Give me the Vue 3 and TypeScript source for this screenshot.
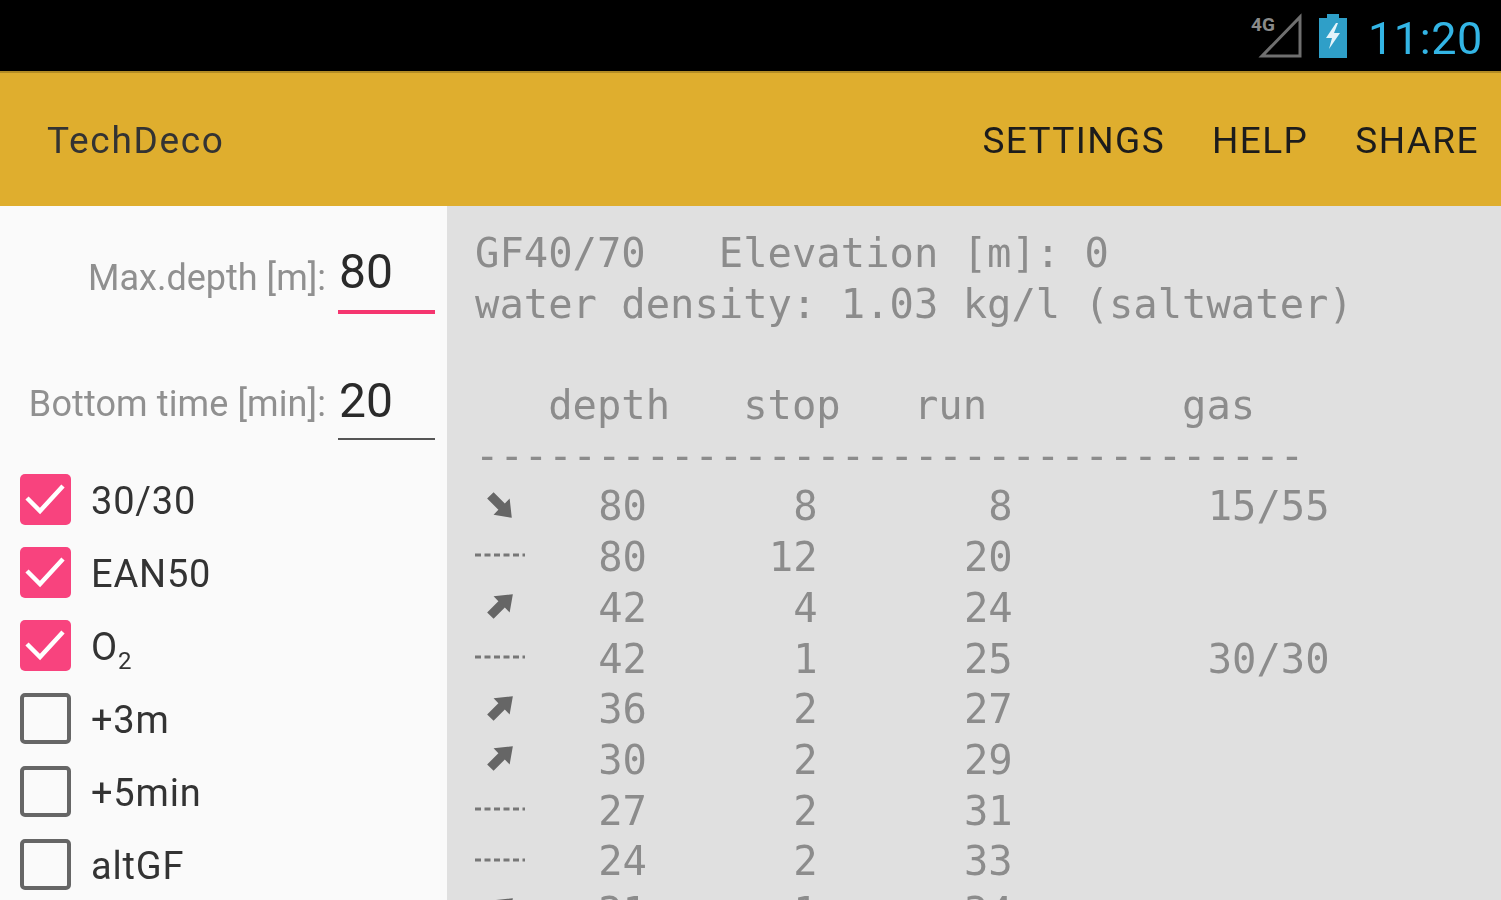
<script setup lang="ts">
interface Check { label: string; sub?: string; on: boolean }
interface Row { icon: 'down' | 'up' | 'flat'; text: string }

const checks: Check[] = [
  { label: '30/30', on: true },
  { label: 'EAN50', on: true },
  { label: 'O', sub: '2', on: true },
  { label: '+3m', on: false },
  { label: '+5min', on: false },
  { label: 'altGF', on: false },
]

const rows: Row[] = [
  { icon: 'down', text: '   80      8       8        15/55' },
  { icon: 'flat', text: '   80     12      20' },
  { icon: 'up', text: '   42      4      24' },
  { icon: 'flat', text: '   42      1      25        30/30' },
  { icon: 'up', text: '   36      2      27' },
  { icon: 'up', text: '   30      2      29' },
  { icon: 'flat', text: '   27      2      31' },
  { icon: 'flat', text: '   24      2      33' },
  { icon: 'up', text: '   21      1      34' },
]
</script>

<template>
  <div class="screen">
    <div class="status">
      <svg class="signal" viewBox="0 0 52 46" width="52" height="46">
        <path d="M49 4V43H11Z" fill="none" stroke="#6f6f6f" stroke-width="3" />
        <text x="0" y="18" class="net">4G</text>
      </svg>
      <svg class="battery" viewBox="0 0 30 44" width="30" height="44">
        <path d="M9 0h12v4h8v40H1V4h8z" fill="#2f9fc8" />
        <path d="M18 9 8 24h6l-3 11 11-16h-6l4-10z" fill="#e4f4fa" />
      </svg>
      <span class="clock">11:20</span>
    </div>
    <header class="bar">
      <span class="title">TechDeco</span>
      <nav class="actions">
        <span>SETTINGS</span>
        <span>HELP</span>
        <span>SHARE</span>
      </nav>
    </header>
    <main class="body">
      <aside class="left">
        <div class="field first">
          <label>Max.depth [m]:</label>
          <span class="input active">80</span>
        </div>
        <div class="field second">
          <label>Bottom time [min]:</label>
          <span class="input">20</span>
        </div>
        <ul class="checks">
          <li v-for="c in checks" :key="c.label">
            <span class="box" :class="{ on: c.on }">
              <svg v-if="c.on" viewBox="0 0 51 51" width="51" height="51">
                <path d="M7 24 20 37 43 12" fill="none" stroke="#fff" stroke-width="4.5" />
              </svg>
            </span>
            <span class="check-label">{{ c.label }}<sub v-if="c.sub">{{ c.sub }}</sub></span>
          </li>
        </ul>
      </aside>
      <section class="plan">
        <pre class="line">GF40/70   Elevation [m]: 0</pre>
        <pre class="line">water density: 1.03 kg/l (saltwater)</pre>
        <pre class="line head">   depth   stop   run        gas</pre>
        <pre class="line">----------------------------------</pre>
        <div v-for="(r, i) in rows" :key="i" class="row">
          <span class="glyph">
            <svg v-if="r.icon === 'flat'" class="dots" viewBox="0 0 50 8" width="50" height="8">
              <path d="M0 4H50" stroke="#777" stroke-width="3" stroke-dasharray="6 3.500" fill="none" />
            </svg>
            <svg v-else class="arrow" :class="{ flip: r.icon === 'down' }" viewBox="0 0 28 28" width="30" height="30">
              <path d="M26 3 23 20 18.500 15.500 8 26 2 20 12.500 9.500 8 5Z" fill="#666" />
            </svg>
          </span>
          <pre class="line inline">{{ r.text }}</pre>
        </div>
      </section>
    </main>
  </div>
</template>

<style>
html, body { margin: 0; background: #000; }
</style>

<style scoped>
.screen {
  width: 1501px;
  height: 900px;
  overflow: hidden;
  display: flex;
  flex-direction: column;
  font-family: Roboto, "Liberation Sans", sans-serif;
  filter: blur(0.6px);
}
.status {
  height: 71px;
  flex: none;
  background: #000;
  display: flex;
  align-items: center;
  justify-content: flex-end;
  padding: 0 18px 0 0;
  box-sizing: border-box;
}
.signal { margin-right: 15px; }
.net { font: bold 19px Roboto, sans-serif; fill: #8a8a8a; }
.battery { margin-right: 20px; }
.clock {
  color: #33b5e5;
  font-size: 45px;
  font-weight: 400;
  letter-spacing: 0.6px;
  line-height: 1;
  margin-top: 5px;
}
.bar {
  height: 135px;
  flex: none;
  background: #dfae2e;
  border-top: 2px solid #b38c25;
  display: flex;
  align-items: center;
  justify-content: space-between;
  padding: 2px 22px 0 47px;
  box-sizing: border-box;
}
.title { font-size: 37px; color: #333; letter-spacing: 1.7px; }
.actions { display: flex; gap: 47px; font-size: 37px; color: #1c1c1c; letter-spacing: 1.4px; }
.body { flex: 1; display: flex; min-height: 0; }
.left {
  width: 447px;
  flex: none;
  background: #fafafa;
}
.field {
  display: flex;
  justify-content: flex-end;
  align-items: center;
  gap: 12px;
  padding-right: 12px;
}
.first { margin-top: 38px; }
.second { margin-top: 56px; }
.field label {
  color: #909090;
  font-size: 36px;
  font-weight: 400;
  white-space: nowrap;
  margin-top: -3px;
}
.second label { letter-spacing: 0.1px; }
.input {
  width: 97px;
  height: 70px;
  line-height: 56px;
  box-sizing: border-box;
  font-size: 48px;
  color: #2a2a2a;
  border-bottom: 2px solid #555;
  padding-left: 1px;
}
.second .input { padding-top: 3px; }
.input.active { border-bottom: 4px solid #f5356f; }
.checks {
  list-style: none;
  margin: 34px 0 0;
  padding: 0 0 0 20px;
  display: flex;
  flex-direction: column;
  gap: 22px;
}
.checks li { display: flex; align-items: center; gap: 20px; height: 51px; }
.box {
  width: 51px;
  height: 51px;
  box-sizing: border-box;
  border: 4px solid #666;
  border-radius: 5px;
  flex: none;
}
.box.on { border: 0; background: #f8437e; }
.box svg { display: block; }
.check-label { font-size: 38px; color: #333; letter-spacing: 0.8px; padding-top: 2px; }
.check-label sub { font-size: 24px; line-height: 0; }
.plan {
  flex: 1;
  background: #e0e0e0;
  padding: 22px 0 0 28px;
  color: #8c8c8c;
}
.line {
  margin: 0;
  height: 50.7px;
  line-height: 50.7px;
  font-family: "DejaVu Sans Mono", monospace;
  font-size: 40.5px;
  white-space: pre;
}
.head { margin-top: 50.7px; }
.row { display: flex; align-items: center; height: 50.7px; }
.glyph {
  width: 50px;
  flex: none;
  display: flex;
  justify-content: flex-start;
  align-items: center;
  height: 50.7px;
}
.glyph svg { display: block; }
.dots { margin-top: -4px; }
.arrow { margin: -4px 0 0 10px; }
.flip { transform: rotate(90deg); }
.inline { flex: none; }
</style>
